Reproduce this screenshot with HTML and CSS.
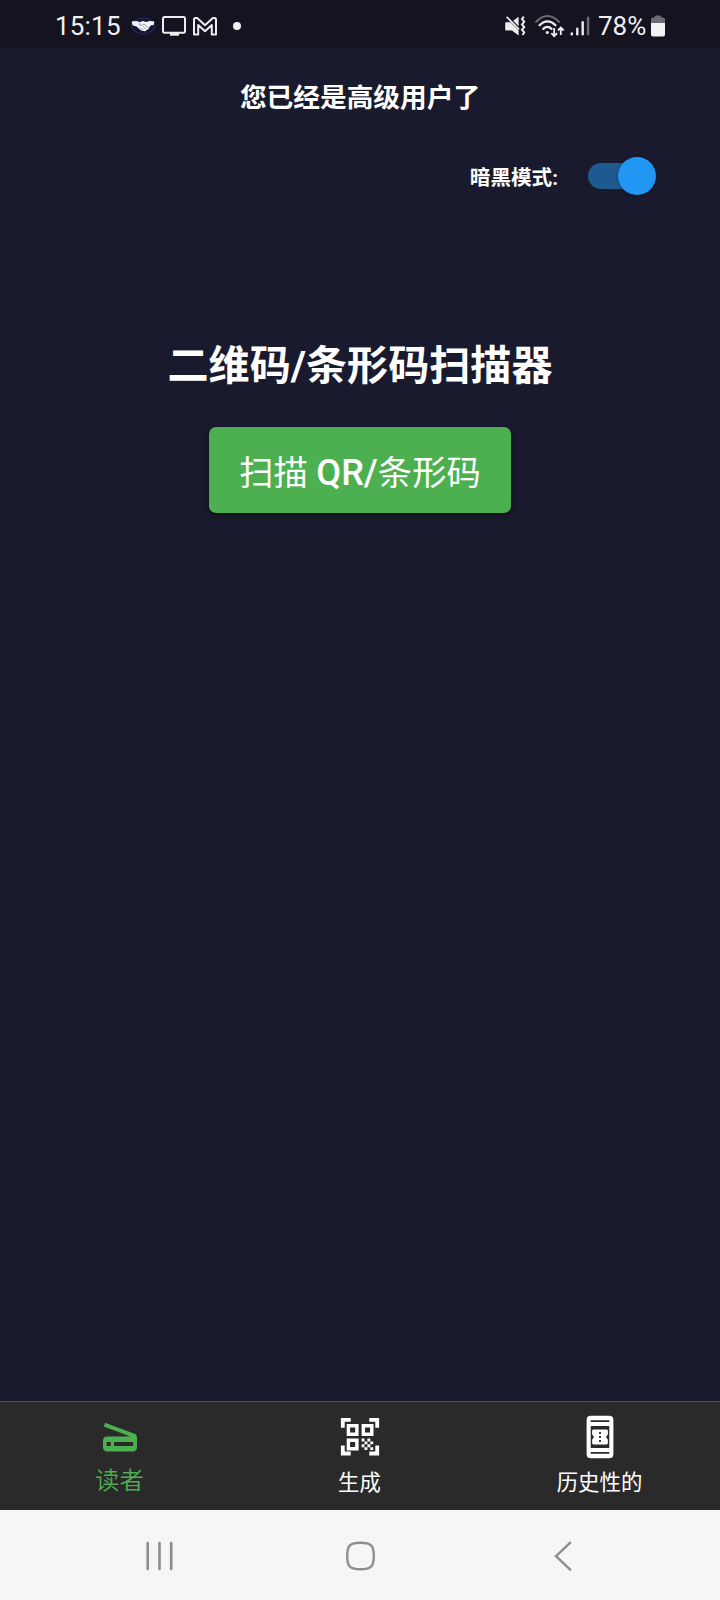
FILE: index.html
```html
<!DOCTYPE html>
<html lang="zh-CN">
<head>
<meta charset="utf-8">
<title>二维码/条形码扫描器</title>
<link rel="stylesheet" href="styles.css">
</head>
<body>
<div class="phone">
  <header class="status">
    <div class="status-left">
      <span class="clock">15:15</span>
      <svg class="ic-shake" width="24" height="18" viewBox="0 0 24 18">
        <ellipse cx="12" cy="9" rx="11.3" ry="7.8" fill="#14162f" stroke="#25285a" stroke-width="1.2"/>
        <path d="M0.6 4.4 L5 4 L9 5 L12 4 L15 5 L19 4 L23.4 4.4 L22.6 8 L19.5 8.6 L17.5 12 L14 14.2 L10 13.4 L5.5 9.5 L1.6 8.3Z" fill="#f4f5fb"/>
        <path d="M9 5.2 L8.2 8 L11 8.2 L13 7 L18 11 M9 10.5 L12 13 M12 9.5 L15 12.2" fill="none" stroke="#777b9e" stroke-width=".7"/>
      </svg>
      <svg class="ic-screen" width="24" height="20" viewBox="0 0 24 20">
        <rect x="1" y="1" width="22" height="15.8" rx="1.4" fill="none" stroke="#ededf0" stroke-width="2"/>
        <path d="M8 16.500h9v3.200H8z" fill="#ededf0"/>
      </svg>
      <svg class="ic-mail" width="24" height="19" viewBox="0 0 24 19">
        <path d="M1 17.500V2.500Q1 1 2.500 1H4.200L12 8.200L19.800 1H21.500Q23 1 23 2.500V17.500H18.800V8L12 14.200L5.200 8V17.500Z" fill="none" stroke="#ededf0" stroke-width="2" stroke-linejoin="round"/>
      </svg>
      <span class="dot"></span>
    </div>
    <div class="status-right">
      <svg class="ic-mute" width="21" height="22" viewBox="0 0 21 22">
        <path d="M1 7.3H5.3L13.6 15.5V20.4L7 15.5H1Q.2 15.5 .2 14.7V8.1Q.2 7.3 1 7.3Z M8.2 5.8 L13.6 1.8 V11.2Z" fill="#ededf0"/>
        <path d="M1.6 1.9 L14 14.4" stroke="#ededf0" stroke-width="1.8"/>
        <path d="M18.8 1.7 L17 4 L19.2 6.7 L17 9.4 L19.2 12.1 L17 14.8 L19.2 17.4 L17.6 20" fill="none" stroke="#ededf0" stroke-width="2"/>
      </svg>
      <svg class="ic-wifi" width="30" height="24" viewBox="0 0 30 24">
        <g fill="none" stroke="#ededf0" stroke-width="2.2" stroke-linecap="round">
          <path d="M1.2 7.7 Q12.4 -3.7 24 7.7" stroke="#6d6c75"/>
          <path d="M4.5 11.3 Q12.4 3.6 20.5 11.3"/>
          <path d="M8.2 14.9 Q12.4 10.7 16.6 14.9"/>
        </g>
        <circle cx="12.3" cy="18.5" r="1.6" fill="#ededf0"/>
        <path d="M19.2 14v8 M16.3 19.2 L19.2 22.2 L22.1 19.2 M25.8 21V13.5 M22.9 16.5 L25.8 13.5 L28.7 16.5" fill="none" stroke="#ededf0" stroke-width="1.8"/>
      </svg>
      <svg class="ic-signal" width="20" height="20" viewBox="0 0 20 20">
        <g stroke-width="2.4" stroke-linecap="round" stroke="#ededf0">
          <path d="M1.8 17.4V18.2"/><path d="M7.3 12.8V18.2"/><path d="M12.7 6.2V18.2"/><path d="M18.1 1.8V18.2" stroke="#6d6c75"/>
        </g>
      </svg>
      <span class="percent">78%</span>
      <svg class="ic-battery" width="14" height="22" viewBox="0 0 14 22">
        <path d="M2 2.4H3.4Q3.8 .5 5 .5H9Q10.200 .5 10.600 2.400H12Q14 2.400 14 4.400V9H0V4.400Q0 2.400 2 2.400Z" fill="#6d6c75"/>
        <path d="M0 8H14V19.500Q14 21.500 12 21.500H2Q0 21.500 0 19.500Z" fill="#f3f3f5"/>
      </svg>
    </div>
  </header>

  <main class="content">
    <p class="premium">您已经是高级用户了</p>
    <div class="mode">
      <span class="mode-label">暗黑模式:</span>
      <span class="switch"><span class="thumb"></span></span>
    </div>
    <h1 class="heading">二维码/条形码扫描器</h1>
    <button class="scan">扫描 <span class="latin">QR/</span>条形码</button>
  </main>

  <nav class="tabs">
    <a class="tab active">
      <svg class="tab-icon" width="44" height="44" viewBox="0 0 44 44">
        <path fill-rule="evenodd" d="M6.900 4.800 L36.500 15.700 Q39 16.600 39 20 V29.100 Q39 33.500 34.600 33.500 H9.400 Q5 33.500 5 29.100 V22.900 Q5 18.500 9.400 18.500 H32.300 L5.800 8.500Z M8.600 24V28H12.800V24Z M16 24V28H35.200V24Z" fill="#4caf50"/>
      </svg>
      <span>读者</span>
    </a>
    <a class="tab">
      <svg class="tab-icon" width="44" height="44" viewBox="0 0 44 44">
        <g fill="none" stroke="#fff">
          <path d="M4.800 10.800V2.900H12.700M31.300 2.900H39.200V10.800M39.200 28.600V36.500H31.300M12.700 36.500H4.800V28.600" stroke-width="3.800"/>
          <path d="M10.400 8.700h8.500v8.500h-8.500zM25.300 8.700h8.500v8.500h-8.500zM10.400 23.300h8.500v8.500h-8.500z" stroke-width="3.400"/>
        </g>
        <path fill="#fff" d="M23.600 21.500h2.900v2.900h-2.900zM29.400 21.500h2.900v2.900h-2.900zM26.500 24.400h2.900v2.900h-2.900zM32.300 24.400h2.900v2.900h-2.900zM23.600 27.300h2.900v2.900h-2.900zM29.400 27.300h2.900v2.900h-2.900zM26.500 30.200h2.900v2.900h-2.900zM32.300 30.200h2.900v2.900h-2.900z"/>
      </svg>
      <span>生成</span>
    </a>
    <a class="tab">
      <svg class="tab-icon" width="44" height="44" viewBox="0 0 44 44">
        <path fill-rule="evenodd" fill="#fff" d="M12.900 -1.300H31.100Q35.400 -1.300 35.400 3V37Q35.400 41.300 31.100 41.300H12.900Q8.600 41.300 8.600 37V3Q8.600 -1.300 12.900 -1.300ZM12.700 3.300V5H31.300V3.300ZM12.700 9V31H31.300V9ZM12.700 35V36.700H31.300V35Z"/>
        <path fill="#fff" d="M15.500 12.600H28.500Q29.900 12.600 29.900 14V17.700Q28.300 18.200 28.300 20Q28.300 21.800 29.900 22.300V26Q29.900 27.400 28.500 27.400H15.500Q14.100 27.400 14.100 26V22.300Q15.700 21.800 15.700 20Q15.700 18.200 14.100 17.700V14Q14.100 12.600 15.500 12.600Z"/>
        <path d="M22 15.100V25.500" stroke="#2b2b2b" stroke-width="1.800" stroke-dasharray="1.800 2.200"/>
      </svg>
      <span>历史性的</span>
    </a>
  </nav>

  <footer class="system">
    <svg width="28" height="30" viewBox="0 0 28 30"><path d="M1.700 2V28M13.500 2V28M25.200 2V28" stroke="#8e8e8e" stroke-width="2.600" stroke-linecap="round"/></svg>
    <svg width="30" height="30" viewBox="0 0 30 30"><path d="M14.500 1.700C25 1.700 27.800 4.500 27.800 15S25 28.300 14.500 28.300S1.200 25.500 1.200 15S4 1.700 14.500 1.700Z" fill="none" stroke="#8e8e8e" stroke-width="2.400"/></svg>
    <svg width="18" height="30" viewBox="0 0 18 30"><path d="M16.200 1.700L2 15.200L16.200 28.700" fill="none" stroke="#8e8e8e" stroke-width="2.400" stroke-linecap="round"/></svg>
  </footer>
</div>
</body>
</html>
```

FILE: styles.css
```css
* { box-sizing: border-box; }
body { margin: 0; background: #191a2d; }
svg { display: block; flex: none; overflow: visible; }
.phone {
  width: 720px;
  height: 1600px;
  display: flex;
  flex-direction: column;
  overflow: hidden;
  color: #fff;
  background: #191a2d;
  font-family: Roboto, "Noto Sans CJK SC", sans-serif;
}
.status {
  height: 48px;
  flex: none;
  display: flex;
  justify-content: space-between;
  align-items: center;
  padding: 4px 55px 0 55px;
  background: #14131f;
  color: #f0f0f3;
  font-size: 26px;
  line-height: 44px;
}
.status-left, .status-right { display: flex; align-items: center; }
.clock { width: 76px; letter-spacing: 0.2px; }
.ic-screen { margin-left: 7px; }
.ic-mail { margin-left: 7px; }
.dot { width: 8px; height: 8px; margin-left: 16px; border-radius: 50%; background: #f0f0f3; }
.ic-wifi { margin-left: 9px; }
.ic-signal { margin-left: 5px; }
.percent { width: 53px; margin-left: 8px; }

.content { flex: 1; display: flex; flex-direction: column; align-items: center; }
.premium { margin: 30px 0 0; font-size: 26.7px; font-weight: 700; line-height: 40px; }
.mode {
  align-self: stretch;
  display: flex;
  justify-content: flex-end;
  align-items: center;
  height: 40px;
  margin-top: 38px;
  padding-right: 64px;
}
.mode-label { padding-top: 4px; font-size: 20.6px; font-weight: 700; line-height: 30px; }
.switch {
  width: 68px;
  height: 26px;
  margin-left: 30px;
  display: flex;
  justify-content: flex-end;
  align-items: center;
  border-radius: 13px;
  background: linear-gradient(90deg, #1e598f 50px, transparent 50px);
}
.thumb { width: 38px; height: 38px; flex: none; border-radius: 50%; background: #2196f3; box-shadow: 0 1px 3px rgba(0,0,0,.3); }
.heading { margin: 140px 0 0; font-size: 41.1px; font-weight: 700; line-height: 60px; }
.scan {
  width: 302px;
  height: 86px;
  margin-top: 31px;
  padding: 6px 0 0;
  border: 0;
  border-radius: 7px;
  background: #4caf50;
  box-shadow: 0 2px 4px rgba(0,0,0,.5);
  color: #fff;
  font-family: Roboto, "Noto Sans CJK SC", sans-serif;
  font-size: 34.3px;
  font-weight: 400;
  line-height: 50px;
}
.latin { font-size: 36px; font-weight: 500; }

.tabs {
  height: 109px;
  flex: none;
  display: grid;
  grid-template-columns: repeat(3, 1fr);
  border-top: 1px solid #56525f;
  background: #2a2a2a;
}
.tab { display: flex; flex-direction: column; align-items: center; padding-top: 15px; padding-right: 1px; font-size: 21.4px; line-height: 30px; }
.tab-icon { margin-left: 1px; }
.tab span { margin-top: 7px; }
.tab.active { color: #4caf50; font-size: 24.4px; font-weight: 350; }
.tab.active .tab-icon { margin-top: 1px; }
.tab.active span { margin-top: 4px; }

.system {
  height: 90px;
  flex: none;
  display: grid;
  grid-template-columns: 200px 30px 196px;
  align-items: center;
  padding: 1px 0 0 146px;
  background: #f6f6f6;
}
.system svg:last-child { justify-self: end; }
```
